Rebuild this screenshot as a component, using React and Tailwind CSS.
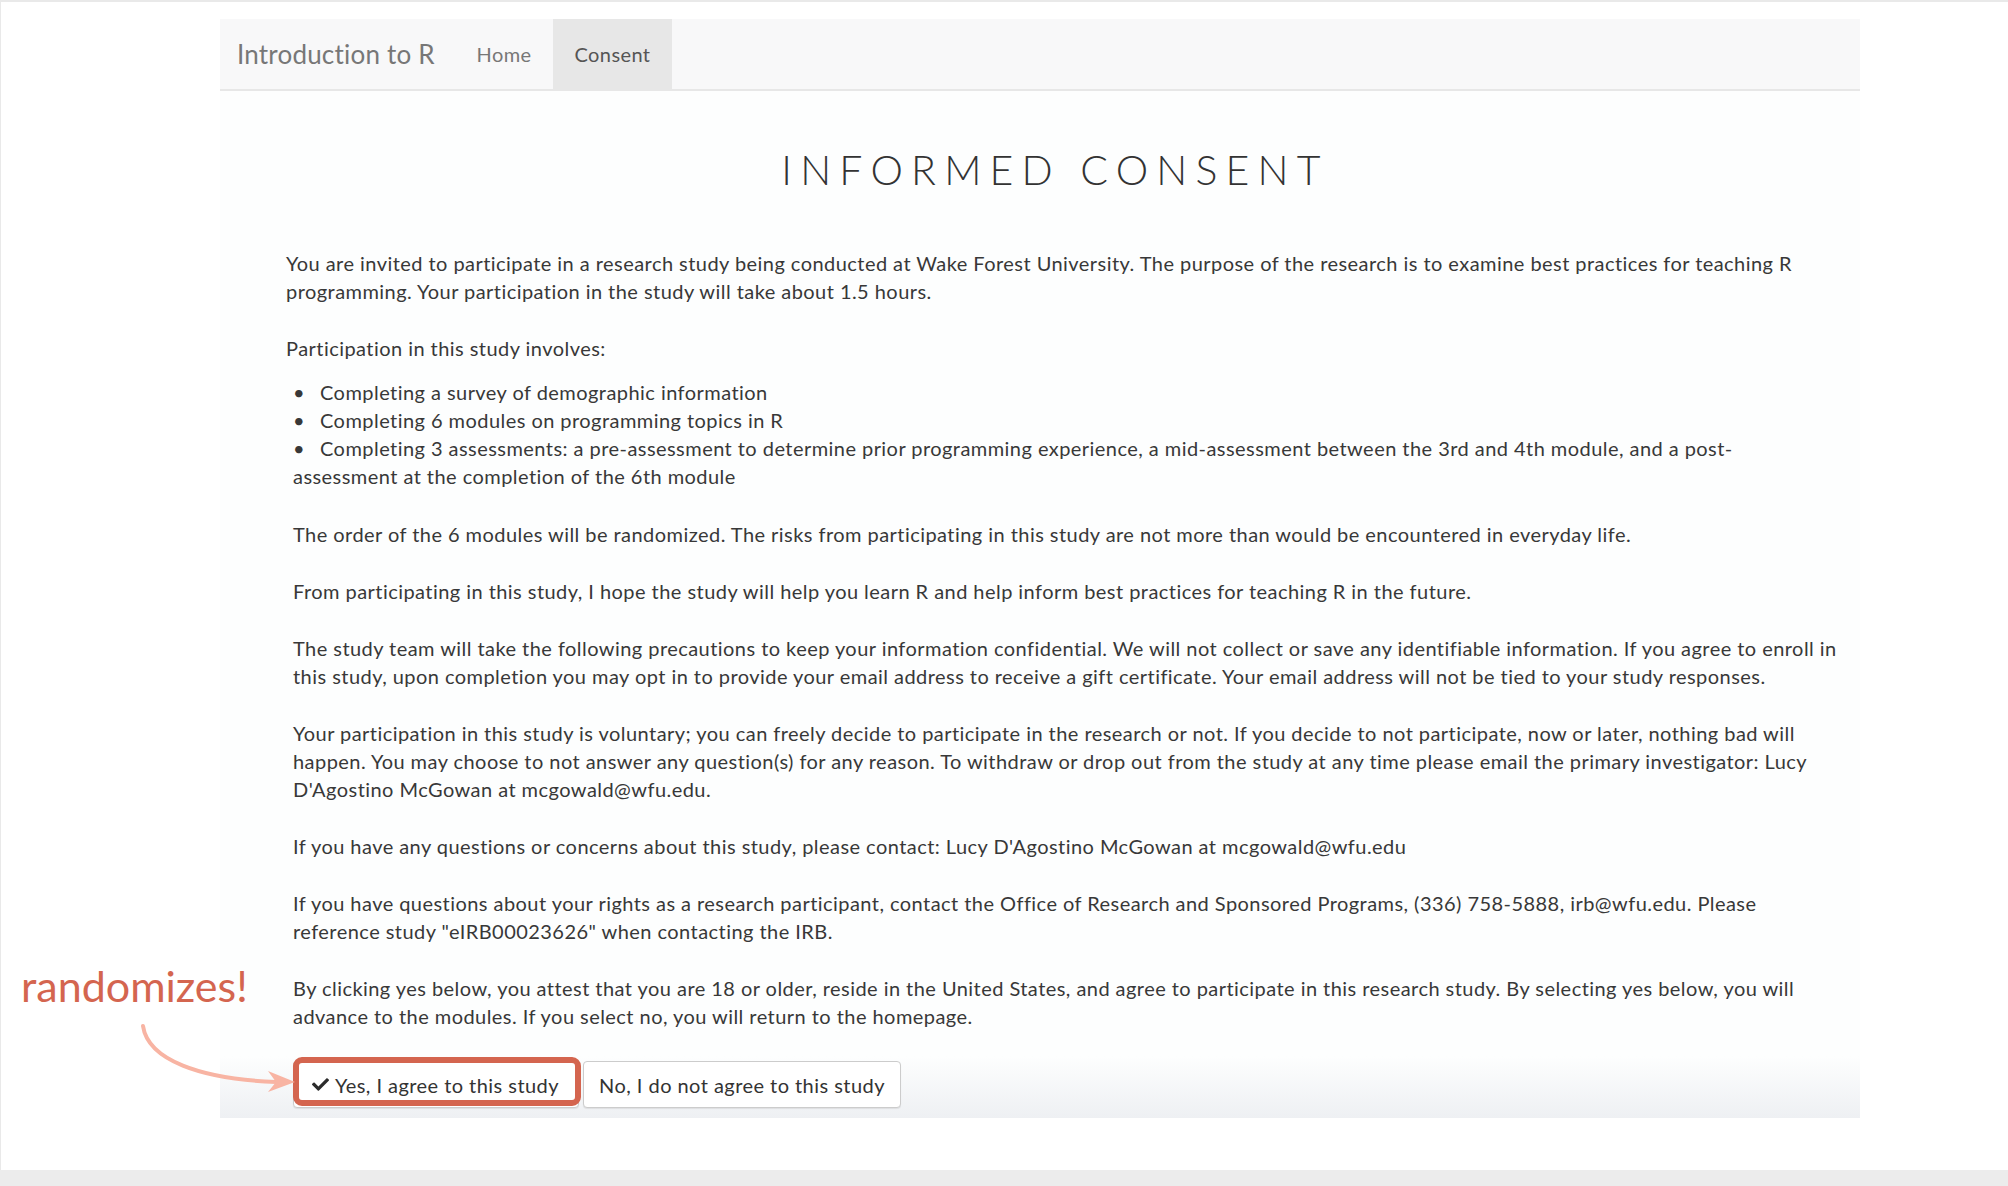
import React from 'react';
import { FaCheck } from 'react-icons/fa';

export default function App() {
  return (
    <div className="relative w-[2008px] h-[1186px] bg-[#ececec] font-['Lato',sans-serif]">
      <div className="h-[1170px] bg-white border-t-2 border-l border-[#e9e9e9] pt-[17px] pl-[219px]">
        <div className="w-[1640px]">
          {/* navbar */}
          <nav className="flex h-[72px] bg-[#f8f8f9] border-b-2 border-[#e7e7e7]">
            <div className="w-[235px] pl-[17px] flex items-center text-[26px] tracking-[0.2px] text-[#777]">
              Introduction to R
            </div>
            <a className="w-[98px] flex items-center justify-center text-[20px] tracking-[0.4px] text-[#777]">Home</a>
            <a className="w-[119px] flex items-center justify-center text-[20px] tracking-[0.4px] text-[#555] bg-[#e7e7e7]">
              Consent
            </a>
          </nav>

          <main className="h-[1027px] pl-[66px] pt-[58px] bg-[linear-gradient(180deg,#fdfefe_0%,#fdfefe_94%,#eef0f3_100%)]">
            <h1 className="w-[1538px] text-center text-[41px] leading-none font-light tracking-[0.2em] text-[#333]">
              INFORMED CONSENT
            </h1>

            <div className="mt-[59px] text-[20px] leading-[28px] tracking-[0.45px] text-[#383838] whitespace-nowrap">
              <p>
                You are invited to participate in a research study being conducted at Wake Forest University. The purpose of the research is to examine best practices for teaching R
                <br />
                programming. Your participation in the study will take about 1.5 hours.
              </p>
              <p className="mt-[29px]">Participation in this study involves:</p>

              <div className="pl-[7px]">
                <ul className="mt-[16px]">
                  <li>
                    <span className="inline-block w-[27px]">•</span>Completing a survey of demographic information
                  </li>
                  <li>
                    <span className="inline-block w-[27px]">•</span>Completing 6 modules on programming topics in R
                  </li>
                  <li>
                    <span className="inline-block w-[27px]">•</span>Completing 3 assessments: a pre-assessment to determine prior programming experience, a mid-assessment between the 3rd and 4th module, and a post-
                    <br />
                    assessment at the completion of the 6th module
                  </li>
                </ul>

                <p className="mt-[30px]">
                  The order of the 6 modules will be randomized. The risks from participating in this study are not more than would be encountered in everyday life.
                </p>
                <p className="mt-[29px]">
                  From participating in this study, I hope the study will help you learn R and help inform best practices for teaching R in the future.
                </p>
                <p className="mt-[29px]">
                  The study team will take the following precautions to keep your information confidential. We will not collect or save any identifiable information. If you agree to enroll in
                  <br />
                  this study, upon completion you may opt in to provide your email address to receive a gift certificate. Your email address will not be tied to your study responses.
                </p>
                <p className="mt-[29px]">
                  Your participation in this study is voluntary; you can freely decide to participate in the research or not. If you decide to not participate, now or later, nothing bad will
                  <br />
                  happen. You may choose to not answer any question(s) for any reason. To withdraw or drop out from the study at any time please email the primary investigator: Lucy
                  <br />
                  D'Agostino McGowan at mcgowald@wfu.edu.
                </p>
                <p className="mt-[29px]">
                  If you have any questions or concerns about this study, please contact: Lucy D'Agostino McGowan at mcgowald@wfu.edu
                </p>
                <p className="mt-[29px]">
                  If you have questions about your rights as a research participant, contact the Office of Research and Sponsored Programs, (336) 758-5888, irb@wfu.edu. Please
                  <br />
                  reference study "eIRB00023626" when contacting the IRB.
                </p>
                <p className="mt-[29px]">
                  By clicking yes below, you attest that you are 18 or older, reside in the United States, and agree to participate in this research study. By selecting yes below, you will
                  <br />
                  advance to the modules. If you select no, you will return to the homepage.
                </p>

                <div className="mt-[31px] flex gap-[4px]">
                  <button className="relative w-[286px] h-[47px] pl-[18px] flex items-center gap-[6px] bg-white border border-[#ccc] rounded-[4px] text-[#333] shadow-[0_1px_1px_rgba(0,0,0,0.08)]">
                    <FaCheck className="w-[17px] h-[17px] text-[#2b2b2b]" />
                    <span>Yes, I agree to this study</span>
                    <span className="absolute -top-[5px] -left-[1px] -right-[3px] bottom-[1px] border-[6px] border-[#d4654f] rounded-[9px]" />
                  </button>
                  <button className="w-[318px] h-[47px] flex items-center justify-center bg-white border border-[#ccc] rounded-[4px] text-[#333] shadow-[0_1px_1px_rgba(0,0,0,0.08)]">
                    No, I do not agree to this study
                  </button>
                </div>
              </div>
            </div>
          </main>
        </div>
      </div>

      {/* annotation */}
      <div className="absolute left-[21px] top-[964px] text-[43px] leading-none text-[#d4654f]">randomizes!</div>
      <svg className="absolute left-[130px] top-[1015px]" width="170" height="85" viewBox="0 0 170 85">
        <path d="M13 11 C 18 45, 70 64, 146 67" fill="none" stroke="#f8b4a3" strokeWidth="4" strokeLinecap="round" />
        <polygon points="165,67 138,56 146,67 138,77" fill="#f8b4a3" />
      </svg>
    </div>
  );
}
